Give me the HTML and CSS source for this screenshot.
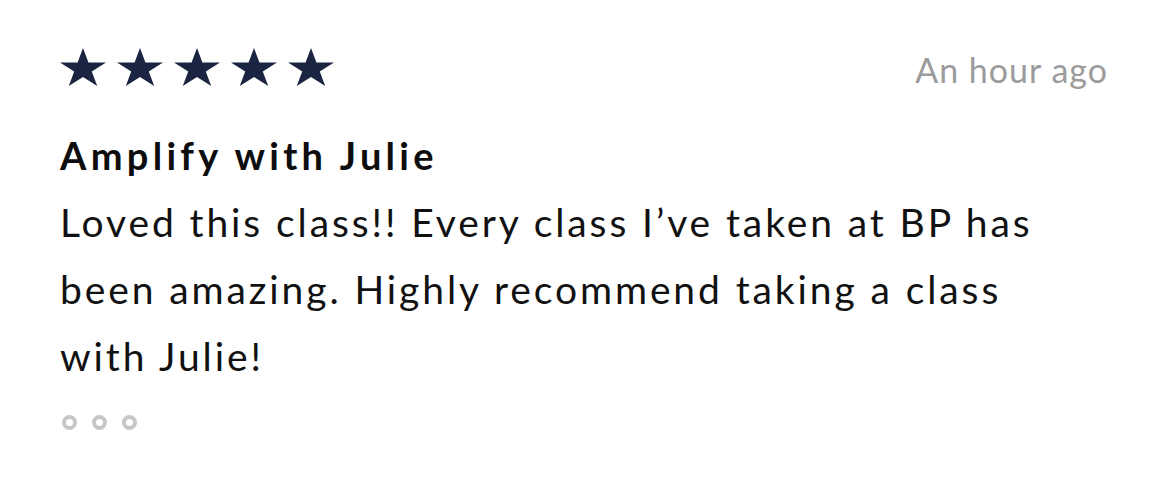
FILE: index.html
```html
<!DOCTYPE html>
<html>
<head>
<meta charset="utf-8">
<link rel="stylesheet" href="styles.css">
</head>
<body>
<div class="review">
  <div class="top">
    <div class="stars">
      <svg class="star" viewBox="0 0 46 38"><path d="M23 0L28.43 14.51H46L31.78 23.48L37.23 38L23 29.02L8.77 38L14.22 23.48L0 14.51H17.57Z"/></svg>
      <svg class="star" viewBox="0 0 46 38"><path d="M23 0L28.43 14.51H46L31.78 23.48L37.23 38L23 29.02L8.77 38L14.22 23.48L0 14.51H17.57Z"/></svg>
      <svg class="star" viewBox="0 0 46 38"><path d="M23 0L28.43 14.51H46L31.78 23.48L37.23 38L23 29.02L8.77 38L14.22 23.48L0 14.51H17.57Z"/></svg>
      <svg class="star" viewBox="0 0 46 38"><path d="M23 0L28.43 14.51H46L31.78 23.48L37.23 38L23 29.02L8.77 38L14.22 23.48L0 14.51H17.57Z"/></svg>
      <svg class="star" viewBox="0 0 46 38"><path d="M23 0L28.43 14.51H46L31.78 23.48L37.23 38L23 29.02L8.77 38L14.22 23.48L0 14.51H17.57Z"/></svg>
    </div>
    <div class="time">An hour ago</div>
  </div>
  <h2 class="title">Amplify with Julie</h2>
  <p class="body">Loved this class!! Every class I’ve taken at BP has been amazing. Highly recommend taking a class with Julie!</p>
  <div class="dots"><span class="dot"></span><span class="dot"></span><span class="dot"></span></div>
</div>
</body>
</html>
```
FILE: styles.css
```css
html, body { margin: 0; padding: 0; background: #fff; }
body { font-family: Lato, "Noto Sans", sans-serif; }
.review { padding: 48px 62px 0 60px; }
.top { display: flex; justify-content: space-between; align-items: flex-start; }
.stars { display: flex; gap: 11px; }
.star { width: 46px; height: 38px; fill: #1b2440; display: block; }
.time { color: #9b9b9b; font-size: 34px; line-height: 40px; margin-top: 2px; letter-spacing: 1px; }
.title { margin: 42px 0 0 0; font-size: 38px; font-weight: 700; line-height: 46px; color: #0d0d0d; letter-spacing: 4.3px; }
.body { margin: 11px 0 0 0; font-size: 39px; line-height: 67px; color: #111; width: 1000px; letter-spacing: 2.9px; }
.dots { display: flex; gap: 15px; margin-top: 25px; padding-left: 2px; }
.dot { width: 7px; height: 7px; border: 4px solid #c6c6c6; border-radius: 50%; display: block; }
```
